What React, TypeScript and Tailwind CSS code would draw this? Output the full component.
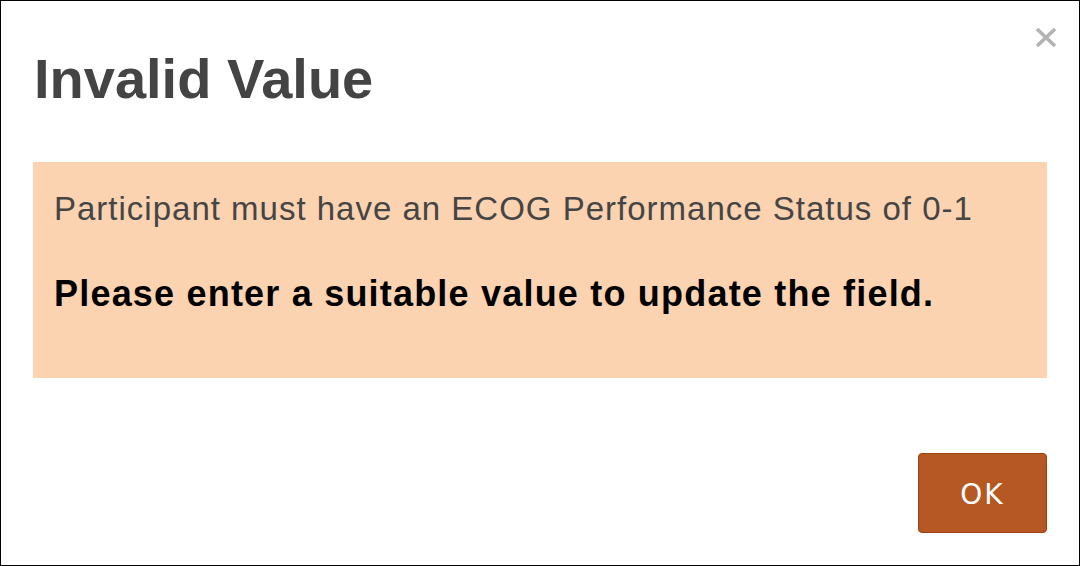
export default function App() {
    return (
        <div className="w-[1080px] h-[566px] bg-white border border-black flex flex-col font-['Liberation_Sans',Arial,sans-serif]">
            {/* Header */}
            <div className="flex items-start justify-between pl-[33px] pr-[21px]">
                <h1 className="mt-[46px] text-[56px] leading-[64px] font-bold text-[#444444]">Invalid Value</h1>
                <button className="mt-[26px] w-[24px] h-[20px] flex items-center justify-center text-[#b3b3b3]">
                    <svg width="22" height="19" viewBox="0 0 22 19" fill="none" stroke="currentColor" strokeWidth="3.6" strokeLinecap="butt">
                        <path d="M2 1 L20 18 M20 1 L2 18" />
                    </svg>
                </button>
            </div>

            {/* Message */}
            <div className="mx-[32px] mt-[51px] h-[216px] bg-[#fbd3b0] px-[21px] pt-[27px]">
                <p className="text-[33px] leading-[40px] tracking-[1px] text-[#454545] whitespace-nowrap">
                    Participant must have an ECOG Performance Status of 0-1
                </p>
                <p className="mt-[45px] text-[36px] leading-[40px] tracking-[1.2px] font-bold text-black whitespace-nowrap">
                    Please enter a suitable value to update the field.
                </p>
            </div>

            {/* Footer */}
            <div className="flex justify-end pr-[32px] mt-[75px]">
                <button className="w-[129px] h-[80px] pt-[4px] rounded-[4px] bg-[#b55823] border border-[#a3400f] text-white text-[28px] tracking-[2px] font-['DejaVu_Sans',sans-serif]">
                    OK
                </button>
            </div>
        </div>
    );
}
